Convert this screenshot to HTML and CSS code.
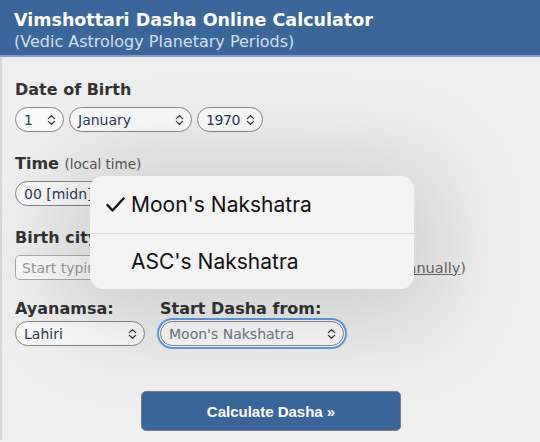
FILE: index.html
```html
<!DOCTYPE html>
<html>
<head>
<meta charset="utf-8">
<link rel="stylesheet" href="styles.css">
</head>
<body>
<header class="hdr">
  <h1 class="title">Vimshottari Dasha Online Calculator</h1>
  <div class="subtitle">(Vedic Astrology Planetary Periods)</div>
</header>
<main class="content">
  <div class="group">
    <div class="label">Date of Birth</div>
    <div class="row">
      <div class="sel w-day"><span>1</span><svg class="chev" viewBox="0 0 10 12"><path d="M1.5 4.5 5 1.2 8.5 4.5M1.5 7.5 5 10.8 8.5 7.5"/></svg></div>
      <div class="sel w-month"><span>January</span><svg class="chev" viewBox="0 0 10 12"><path d="M1.5 4.5 5 1.2 8.5 4.5M1.5 7.5 5 10.8 8.5 7.5"/></svg></div>
      <div class="sel w-year"><span>1970</span><svg class="chev" viewBox="0 0 10 12"><path d="M1.5 4.5 5 1.2 8.5 4.5M1.5 7.5 5 10.8 8.5 7.5"/></svg></div>
    </div>
  </div>
  <div class="group">
    <div class="label">Time <span class="hint">(local time)</span></div>
    <div class="row">
      <div class="sel w-time"><span>00 [midn]</span><svg class="chev" viewBox="0 0 10 12"><path d="M1.5 4.5 5 1.2 8.5 4.5M1.5 7.5 5 10.8 8.5 7.5"/></svg></div>
    </div>
  </div>
  <div class="group g-city">
    <div class="label">Birth city</div>
    <div class="row city">
      <div class="input"><span class="ph">Start typing city name</span></div>
      <span class="manual">(or <a href="#">enter manually</a>)</span>
    </div>
  </div>
  <div class="group pair">
    <div class="col">
      <div class="label">Ayanamsa:</div>
      <div class="sel w-ayan"><span>Lahiri</span><svg class="chev" viewBox="0 0 10 12"><path d="M1.5 4.5 5 1.2 8.5 4.5M1.5 7.5 5 10.8 8.5 7.5"/></svg></div>
    </div>
    <div class="col">
      <div class="label">Start Dasha from:</div>
      <div class="sel w-start focus"><span>Moon's Nakshatra</span><svg class="chev" viewBox="0 0 10 12"><path d="M1.5 4.5 5 1.2 8.5 4.5M1.5 7.5 5 10.8 8.5 7.5"/></svg></div>
    </div>
  </div>
  <div class="actions">
    <button class="btn">Calculate Dasha »</button>
  </div>
</main>
<div class="popup">
  <div class="opt"><svg class="check" viewBox="0 0 19 15"><polyline points="1.5,8 6.5,13.5 17.5,1.5"/></svg>Moon's Nakshatra</div>
  <div class="opt">ASC's Nakshatra</div>
</div>
</body>
</html>
```
FILE: styles.css
```css
html, body { margin: 0; padding: 0; }
body {
  width: 540px;
  height: 442px;
  overflow: hidden;
  background: #efefef;
  font-family: "DejaVu Sans", Verdana, sans-serif;
  position: relative;
}
.hdr {
  background: #3a6699;
  height: 57px;
  box-sizing: border-box;
  padding: 9px 14px 0;
  border-bottom: 2px solid #7f9fc4;
}
.title {
  margin: 0;
  color: #fff;
  font-size: 17.5px;
  font-weight: bold;
  line-height: 22px;
}
.subtitle {
  color: #cfe0f5;
  font-size: 16px;
  line-height: 21px;
}
.content {
  border-left: 2px solid #d6d6d6;
  height: 383px;
  box-sizing: border-box;
  padding: 22px 0 0 13px;
}
.group { margin-bottom: 21px; }
.g-city { margin-bottom: 18px; }
.label {
  color: #333;
  font-weight: bold;
  font-size: 16px;
  line-height: 22px;
  margin-bottom: 6px;
}
.hint {
  font-weight: normal;
  font-size: 13.5px;
  color: #555;
}
.row { display: flex; gap: 5px; align-items: center; }
.sel {
  height: 25px;
  box-sizing: border-box;
  border: 1px solid #878787;
  border-radius: 13px;
  background: #fafafa;
  display: flex;
  align-items: center;
  justify-content: space-between;
  padding: 0 7px 0 8px;
  font-size: 14px;
  color: #2b3b52;
}
.chev {
  width: 9px;
  height: 12px;
  flex: none;
  fill: none;
  stroke: #3a3a3a;
  stroke-width: 1.4;
  stroke-linecap: round;
  stroke-linejoin: round;
}
.w-day { width: 49px; }
.w-month { width: 123px; }
.w-year { width: 66px; }
.w-year span { letter-spacing: -0.4px; }
.w-time { width: 120px; }
.w-ayan { width: 130px; }
.w-start { width: 184px; color: #6a7688; }
.focus { box-shadow: 0 0 0 1px #fff, 0 0 0 3px #5d9ee2; }
.city { gap: 7px; }
.input {
  width: 303px;
  height: 25px;
  box-sizing: border-box;
  border: 1px solid #a8a8a8;
  border-radius: 5px;
  background: #fafafa;
  display: flex;
  align-items: center;
  padding-left: 6px;
  font-size: 14px;
}
.ph { color: #999; }
.manual { color: #666; font-size: 14.5px; }
.manual a { color: #666; }
.pair { display: flex; gap: 15px; }
.col .label { margin-bottom: 1px; }
.actions { display: flex; padding-left: 126px; padding-top: 24px; }
.btn {
  width: 260px;
  height: 40px;
  background: #3a6699;
  color: #fff;
  font-family: "Liberation Sans", Arial, sans-serif;
  font-weight: bold;
  font-size: 15px;
  border: 1px solid #7a7a7a;
  border-radius: 5px;
}
.popup {
  position: absolute;
  left: 90px;
  top: 176px;
  width: 324px;
  border-radius: 13px;
  background: #f3f3f3;
  box-shadow: 0 10px 90px 30px rgba(0,0,0,0.13);
  font-family: Inter, "Noto Sans", sans-serif;
  font-size: 21px;
  color: #111;
}
.opt {
  height: 57px;
  display: flex;
  align-items: center;
  padding-left: 41px;
  position: relative;
}
.opt + .opt { border-top: 1px solid #d9d9d9; height: 55px; }
.check {
  position: absolute;
  left: 16px;
  top: 21px;
  width: 19px;
  height: 15px;
  fill: none;
  stroke: #111;
  stroke-width: 2.4;
  stroke-linecap: round;
  stroke-linejoin: round;
}
```
